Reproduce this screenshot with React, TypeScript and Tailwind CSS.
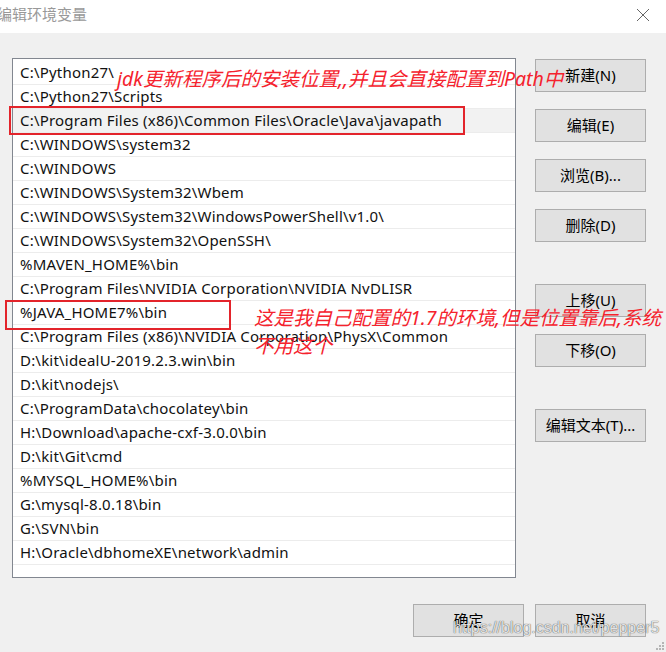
import React from "react";

const items = [
  "C:\\Python27\\",
  "C:\\Python27\\Scripts",
  "C:\\Program Files (x86)\\Common Files\\Oracle\\Java\\javapath",
  "C:\\WINDOWS\\system32",
  "C:\\WINDOWS",
  "C:\\WINDOWS\\System32\\Wbem",
  "C:\\WINDOWS\\System32\\WindowsPowerShell\\v1.0\\",
  "C:\\WINDOWS\\System32\\OpenSSH\\",
  "%MAVEN_HOME%\\bin",
  "C:\\Program Files\\NVIDIA Corporation\\NVIDIA NvDLISR",
  "%JAVA_HOME7%\\bin",
  "C:\\Program Files (x86)\\NVIDIA Corporation\\PhysX\\Common",
  "D:\\kit\\idealU-2019.2.3.win\\bin",
  "D:\\kit\\nodejs\\",
  "C:\\ProgramData\\chocolatey\\bin",
  "H:\\Download\\apache-cxf-3.0.0\\bin",
  "D:\\kit\\Git\\cmd",
  "%MYSQL_HOME%\\bin",
  "G:\\mysql-8.0.18\\bin",
  "G:\\SVN\\bin",
  "H:\\Oracle\\dbhomeXE\\network\\admin",
];

function Btn({ label, className = "" }: { label: string; className?: string }) {
  return (
    <div
      className={
        "w-[111px] h-[33px] border border-[#adadad] bg-[#e1e1e1] flex items-center justify-center text-[15px] text-black " +
        className
      }
    >
      {label}
    </div>
  );
}

export default function App() {
  return (
    <div className="relative w-[666px] h-[652px] overflow-hidden bg-[#f0f0f0] font-['Noto_Sans','Noto_Sans_CJK_SC',sans-serif]">
      {/* title bar */}
      <div className="h-[33px] bg-white flex items-center justify-between">
        <span className="ml-[-3px] text-[15px] text-[#999999] mt-[-4px]">编辑环境变量</span>
        <svg width="14" height="14" viewBox="0 0 14 14" className="mr-[16px] mt-[-4px]">
          <path d="M1 1 L13 13 M13 1 L1 13" stroke="#666" strokeWidth="1" />
        </svg>
      </div>

      {/* body */}
      <div className="flex mt-[25px]">
        <div className="ml-[12px] w-[504px] h-[520px] border border-[#828790] bg-white pt-[2px]">
          {items.map((t, i) => (
            <div
              key={i}
              className={
                "h-[24px] border-b border-[#ececec] pl-[7px] flex items-center text-[15px] tracking-[0.2px] leading-none text-[#111] whitespace-nowrap " +
                (i === 2 ? "bg-[#f2f2f2]" : "")
              }
            >
              {t}
            </div>
          ))}
        </div>
        <div className="ml-[19px] mt-[1px] flex flex-col">
          <Btn label="新建(N)" />
          <Btn label="编辑(E)" className="mt-[17px]" />
          <Btn label="浏览(B)..." className="mt-[17px]" />
          <Btn label="删除(D)" className="mt-[17px]" />
          <Btn label="上移(U)" className="mt-[42px]" />
          <Btn label="下移(O)" className="mt-[17px]" />
          <Btn label="编辑文本(T)..." className="mt-[42px]" />
        </div>
      </div>

      {/* bottom buttons */}
      <div className="flex mt-[26px] ml-[413px] gap-[11px]">
        <Btn label="确定" />
        <Btn label="取消" />
      </div>

      {/* red highlight boxes */}
      <div className="absolute left-[9px] top-[106px] w-[456px] h-[29px] border-2 border-[#e3242b]" />
      <div className="absolute left-[5px] top-[300px] w-[226px] h-[30px] border-2 border-[#e3242b]" />

      {/* annotations */}
      <div className="absolute left-[117px] top-[67px] text-[19.5px] leading-[24px] italic text-[#f5222d] whitespace-nowrap">
        jdk更新程序后的安装位置,,并且会直接配置到Path中
      </div>
      <div className="absolute left-[254px] top-[304px] text-[19.5px] leading-[28px] italic text-[#f5222d] whitespace-nowrap">
        <div>这是我自己配置的1.7的环境,但是位置靠后,系统</div>
        <div>不用这个</div>
      </div>

      {/* watermark */}
      <div className="absolute left-[453px] top-[616px] text-[16px] font-['Liberation_Sans',sans-serif] text-[rgba(255,255,255,0.85)] [text-shadow:0_0_1px_rgba(0,0,0,0.6),0_0_1px_rgba(0,0,0,0.4)] whitespace-nowrap">
        https://blog.csdn.net/pepper5
      </div>

      {/* resize grip */}
      <svg className="absolute right-[1px] bottom-[1px]" width="9" height="9" viewBox="0 0 9 9">
        <rect x="6" y="0" width="2" height="2" fill="#b5b5b5" />
        <rect x="3" y="3" width="2" height="2" fill="#b5b5b5" />
        <rect x="6" y="3" width="2" height="2" fill="#b5b5b5" />
        <rect x="0" y="6" width="2" height="2" fill="#b5b5b5" />
        <rect x="3" y="6" width="2" height="2" fill="#b5b5b5" />
        <rect x="6" y="6" width="2" height="2" fill="#b5b5b5" />
      </svg>
    </div>
  );
}
